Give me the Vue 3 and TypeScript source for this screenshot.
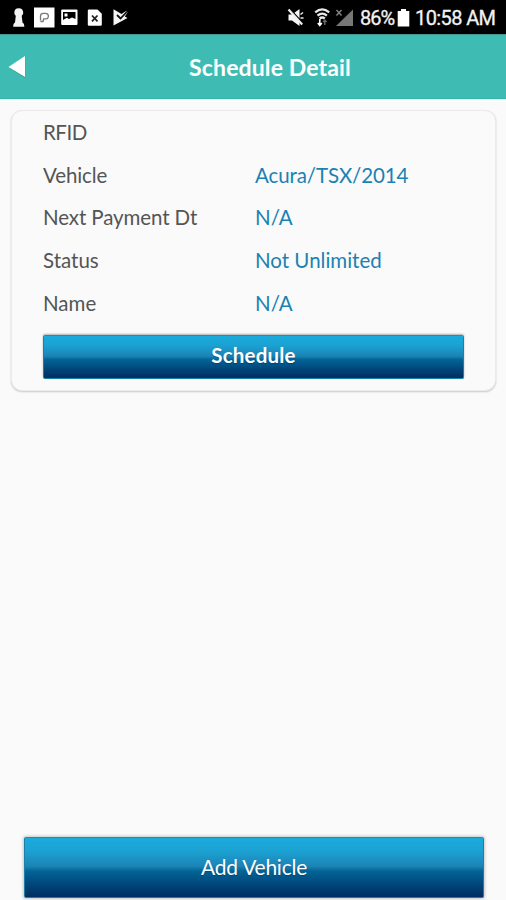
<script setup lang="ts">
interface Row {
  label: string
  value: string
  kind: string
}

const rows: Row[] = [
  { label: 'RFID', value: '', kind: 'rfid' },
  { label: 'Vehicle', value: 'Acura/TSX/2014', kind: 'vehicle' },
  { label: 'Next Payment Dt', value: 'N/A', kind: 'payment' },
  { label: 'Status', value: 'Not Unlimited', kind: 'status' },
  { label: 'Name', value: 'N/A', kind: 'name' },
]
</script>

<template>
  <div class="screen">
    <div class="statusbar">
      <svg class="notifications" width="134" height="34" viewBox="0 0 134 34">
        <path d="M18.700 8.200a4.500 4.500 0 0 1 4.500 4.300c0 1.700-.8 2.700-1.500 3.300l.8 6.800c1.300.8 1.800 1.900 1.800 4.100H13.200c0-2.200.5-3.300 1.800-4.100l.8-6.800c-.8-.6-1.500-1.600-1.500-3.300a4.500 4.500 0 0 1 4.400-4.300z" fill="#f4f4f4" />
        <rect x="34" y="7.500" width="20.500" height="20" fill="#fff" />
        <path d="M40.500 20.500v-4.500q0-2.700 3-2.700h1.700q3.200 0 3.200 2.800t-3.200 2.800h-2.200M40.500 21.500h2.500l.8-3" fill="none" stroke="#777" stroke-width="1.300" />
        <rect x="61.200" y="9.500" width="16.300" height="15.500" rx="1" fill="#fff" />
        <path d="M63 12h12.500v7l-3.500-1.500-3 1.500-2.100-1.200-3.900 2.200z" fill="#000" />
        <path d="M64.500 13.500h3v3h-3z" fill="#fff" />
        <path d="M89 9.500h8.500l4.300 4.300v10.700q0 1.200-1.200 1.200H89q-1.200 0-1.200-1.200V10.700q0-1.200 1.200-1.200z" fill="#fff" />
        <path d="M92 15.500l5.500 5.800M97.500 15.500L92 21.300" stroke="#222" stroke-width="1.800" />
        <path d="M113.500 9.300l8 4.700 5-3.200 1 1.700-2.700 4 2.700 1.500-14 7.500z" fill="#f5f5f5" />
        <path d="M117 15l3.500 3.500 6.700-7" fill="none" stroke="#111" stroke-width="1.800" />
      </svg>
      <div class="system">
        <svg width="74" height="34" viewBox="0 0 74 34">
          <path d="M6.500 14.500H10L17.500 9v17L10 20.500H6.500z" fill="#f6f6f6" />
          <path d="M8 9l13.500 14.700" stroke="#000" stroke-width="1.500" />
          <path d="M6.500 9.500l13.700 15" stroke="#eee" stroke-width="2.200" />
          <path d="M18.500 14.500l2.500-2M18.500 18h3" stroke="#eee" stroke-width="1.500" />
          <path d="M33.200 12.300q7-5.800 14 0M35.500 15.600q4.700-4 9.400 0M37.600 18.500q2.600-2.100 5.200 0" fill="none" stroke="#e8e8e8" stroke-width="2.300" />
          <path d="M37.800 19v6M35.800 23l2 2.500 2-2.500" fill="none" stroke="#fff" stroke-width="1.600" />
          <path d="M42.800 25v-5M41 22l1.800-2 1.800 2" fill="none" stroke="#666" stroke-width="1.500" />
          <path d="M71 9.500V26H54z" fill="#777" />
          <path d="M54.500 10l5 5.500M59.500 10l-5 5.500" stroke="#858585" stroke-width="1.400" />
        </svg>
        <span class="percent">86%</span>
        <svg class="battery" width="13" height="34" viewBox="0 0 13 34">
          <path d="M4 9h5v2h3.300v15.500H.7V11H4z" fill="#fff" />
        </svg>
        <span class="clock">10:58 AM</span>
      </div>
    </div>

    <header class="header">
      <svg class="back" width="18" height="24" viewBox="0 0 18 24">
        <path d="M17.200 2v21L1.200 12.800z" fill="#2e9186" />
        <path d="M17 1v21L.5 12z" fill="#fff" />
      </svg>
      <h1 class="title">Schedule Detail</h1>
    </header>

    <main class="content">
      <section class="card">
        <dl v-for="row in rows" :key="row.label" class="row" :class="row.kind">
          <dt>{{ row.label }}</dt>
          <dd>{{ row.value }}</dd>
        </dl>
        <button class="btn schedule"><span>Schedule</span></button>
      </section>
    </main>

    <button class="btn add"><span>Add Vehicle</span></button>
  </div>
</template>

<style>
body {
  margin: 0;
  background: #fafafa;
}
</style>

<style scoped>
.screen {
  width: 506px;
  height: 900px;
  display: flex;
  flex-direction: column;
  box-sizing: border-box;
  overflow: hidden;
  background: #fafafa;
  font-family: Lato, sans-serif;
}
.statusbar {
  height: 34px;
  flex: none;
  display: flex;
  justify-content: space-between;
  background: #000;
  color: #f2f2f2;
  font: 20px/37px Roboto, sans-serif;
}
.system {
  width: 224px;
  display: flex;
  white-space: nowrap;
}
.system svg {
  flex: none;
}
.percent {
  width: 41px;
  padding-left: 4px;
  box-sizing: border-box;
  letter-spacing: -1px;
  -webkit-text-stroke: 0.3px #f2f2f2;
}
.clock {
  margin-left: 5px;
  letter-spacing: -0.600px;
  -webkit-text-stroke: 0.3px #f2f2f2;
}
.header {
  height: 65px;
  flex: none;
  display: flex;
  align-items: center;
  box-sizing: border-box;
  padding: 0 0 0 8px;
  background: #3ebcb4;
  border-top: 1px solid #43948e;
  border-bottom: 1px solid #35b5ad;
}
.back {
  flex: none;
}
.title {
  flex: 1;
  margin: 0;
  padding-left: 8px;
  text-align: center;
  color: #fff;
  font-size: 23px;
  line-height: 30px;
  font-weight: 700;
  letter-spacing: 0.130px;
}
.content {
  flex: 1;
  padding: 10px 10px 0 11px;
  border-top: 1px solid #e1f4fb;
}
.card {
  height: 281px;
  box-sizing: border-box;
  border: 1px solid #eceaea;
  border-radius: 11px;
  padding: 0 30px 0 31px;
  box-shadow: 0 1px 2px rgba(0, 0, 0, 0.2);
  background: #fafafa;
}
.row {
  height: 42.600px;
  margin: 0;
  display: grid;
  grid-template-columns: 212px 1fr;
  align-items: center;
  font-size: 20.500px;
  color: #555;
  white-space: nowrap;
}
.rfid {
  letter-spacing: -0.500px;
}
.vehicle,
.payment dt {
  letter-spacing: -0.100px;
}
dd {
  margin: 0;
  color: #1a82b2;
}
.btn {
  display: flex;
  align-items: center;
  justify-content: center;
  box-sizing: border-box;
  padding: 0 0 3px;
  color: #fff;
  font-family: Lato, sans-serif;
  border: 1px solid #1b7fa8;
  border-top-color: #507c91;
  border-radius: 2px;
  background: linear-gradient(#1aabdc 0%, #1ba2d2 22%, #1c83b5 48%, #026596 56%, #004b7f 75%, #002d61 100%);
  text-shadow: 0 1px 1px rgba(0, 30, 80, 0.35);
}
.schedule {
  width: 421px;
  height: 44px;
  margin-top: 11px;
  font-size: 20.500px;
  font-weight: 700;
  letter-spacing: 0.200px;
  box-shadow: 0 -1px 2px rgba(0, 0, 0, 0.3);
}
.add {
  flex: none;
  width: 460px;
  height: 61px;
  margin: 0 0 2px 24px;
  font-size: 21px;
  letter-spacing: -0.250px;
  box-shadow: 0 0 3px 1px rgba(0, 0, 0, 0.2);
}
</style>
